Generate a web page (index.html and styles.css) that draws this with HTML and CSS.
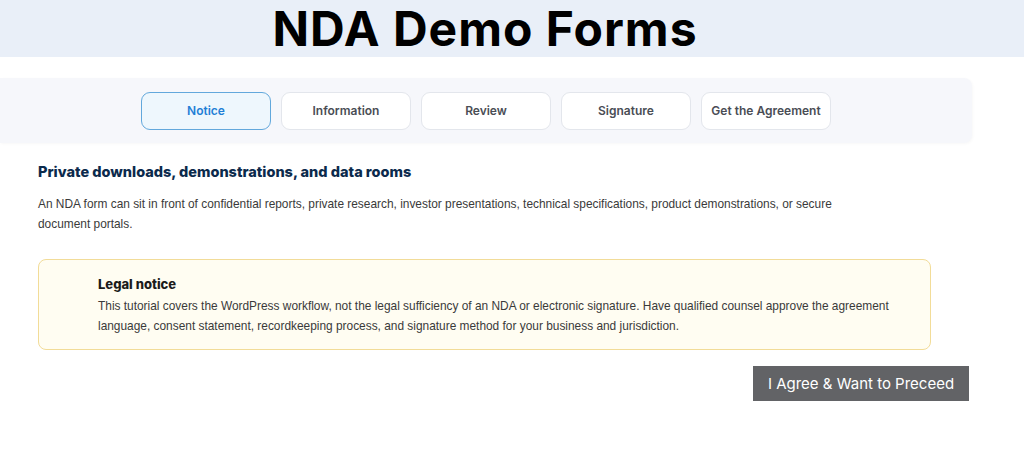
FILE: index.html
```html
<!DOCTYPE html>
<html lang="en">
<head>
    <meta charset="UTF-8">
    <meta name="viewport" content="width=device-width, initial-scale=1.0">
    <title>NDA Demo Forms</title>
    <link rel="stylesheet" href="styles.css">
</head>
<body>
    <header class="page-header">
        <h1>NDA Demo Forms</h1>
    </header>
    <main>
        <nav class="steps">
            <button class="step active">Notice</button>
            <button class="step">Information</button>
            <button class="step">Review</button>
            <button class="step">Signature</button>
            <button class="step">Get the Agreement</button>
        </nav>
        <section class="content">
            <h2>Private downloads, demonstrations, and data rooms</h2>
            <p class="intro">An NDA form can sit in front of confidential reports, private research, investor presentations, technical specifications, product demonstrations, or secure document portals.</p>
            <div class="notice">
                <h3>Legal notice</h3>
                <p>This tutorial covers the WordPress workflow, not the legal sufficiency of an NDA or electronic signature. Have qualified counsel approve the agreement language, consent statement, recordkeeping process, and signature method for your business and jurisdiction.</p>
            </div>
            <div class="actions">
                <button class="agree">I Agree &amp; Want to Preceed</button>
            </div>
        </section>
    </main>
</body>
</html>
```

FILE: styles.css
```css
body {
    margin: 0;
    padding: 0;
    background-color: #ffffff;
    font-family: Inter, "Liberation Sans", sans-serif;
    color: #333;
}
.page-header {
    background-color: #e9eff8;
    height: 57px;
    display: flex;
    align-items: center;
    justify-content: center;
}
.page-header h1 {
    margin: 0;
    margin-left: -54px;
    font-size: 48px;
    font-weight: 700;
    color: #000;
    letter-spacing: 1px;
}
main {
    padding-top: 21px;
}
.steps {
    width: 972px;
    height: 65px;
    box-sizing: border-box;
    background-color: #f6f7fb;
    border-radius: 0 8px 8px 0;
    box-shadow: 1px 1px 3px rgba(0, 0, 0, 0.03);
    display: flex;
    align-items: center;
    justify-content: center;
    gap: 10px;
}
.step {
    width: 130px;
    height: 38px;
    background: #fff;
    border: 1px solid #e3e6ec;
    border-radius: 9px;
    font-family: inherit;
    font-size: 12px;
    font-weight: 600;
    color: #4a4d55;
    cursor: pointer;
}
.step.active {
    background: #eef7fd;
    border-color: #62a8dc;
    color: #1f7fd6;
}
.content {
    padding: 0 38px;
}
.content h2 {
    margin: 20px 0 0;
    font-size: 14.5px;
    font-weight: 800;
    color: #0b2a4c;
}
.intro {
    width: 810px;
    margin: 14px 0 0;
    font-family: "Liberation Sans", sans-serif;
    font-size: 11.9px;
    line-height: 20px;
    color: #3a3a3a;
}
.notice {
    width: 893px;
    box-sizing: border-box;
    margin-top: 25px;
    padding: 16px 40px 13px 59px;
    background-color: #fffdf2;
    border: 1px solid #f2dc98;
    border-radius: 8px;
}
.notice h3 {
    margin: 0;
    font-size: 13px;
    font-weight: 800;
    color: #1b1b1b;
}
.notice p {
    margin: 4px 0 0;
    font-family: "Liberation Sans", sans-serif;
    font-size: 11.9px;
    line-height: 20px;
    color: #3a3a3a;
}
.actions {
    width: 931px;
    display: flex;
    justify-content: flex-end;
    margin-top: 16px;
}
.agree {
    width: 216px;
    height: 35px;
    background-color: #626366;
    border: none;
    color: #fff;
    font-family: inherit;
    font-size: 15px;
    cursor: pointer;
}
```
